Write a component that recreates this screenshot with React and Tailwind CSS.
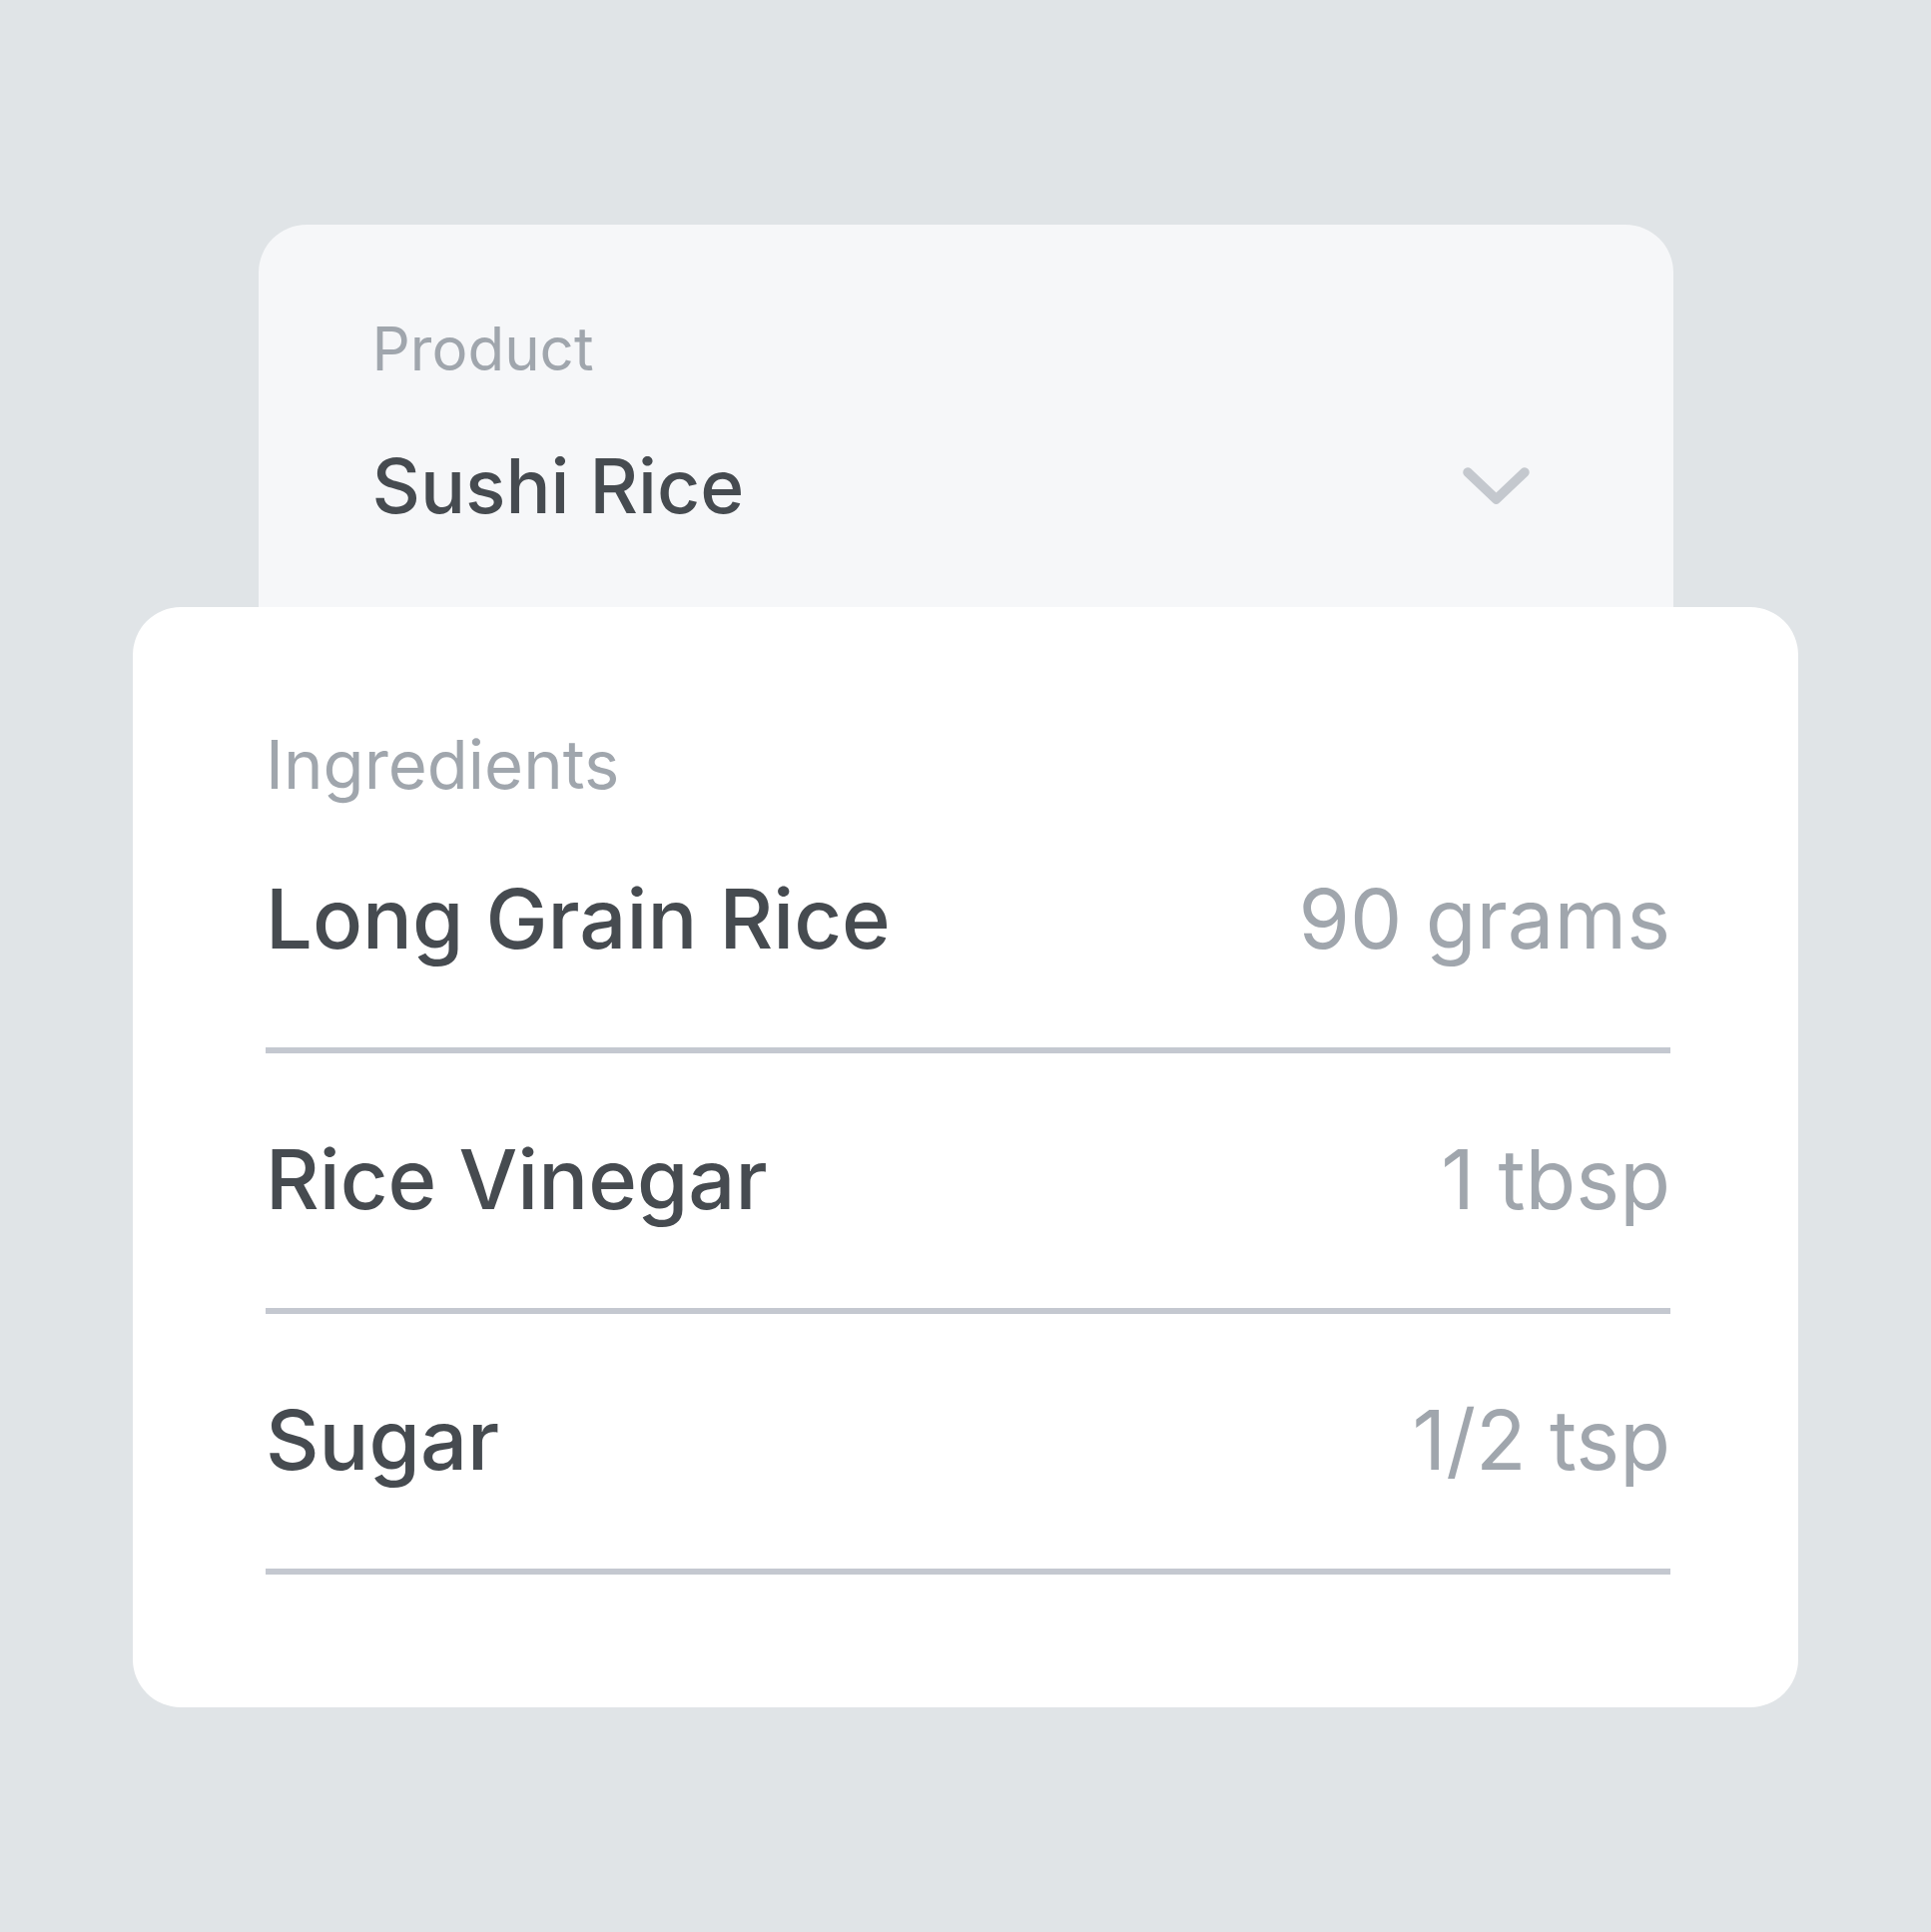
import React from 'react'

const rows = [
  { name: 'Long Grain Rice', amount: '90 grams' },
  { name: 'Rice Vinegar', amount: '1 tbsp' },
  { name: 'Sugar', amount: '1/2 tsp' },
]

export default function App() {
  return (
    <div
      className="min-h-[1935px] w-full bg-[#e0e4e7] flex flex-col items-center pt-[225px]"
      style={{ fontFamily: 'Inter, "Noto Sans", sans-serif' }}
    >
      {/* product select */}
      <div className="w-[1417px] h-[383px] bg-[#f6f7f9] rounded-t-[48px] pl-[114px] pr-[144px] pt-[94px]">
        <p className="text-[60px] leading-none text-[#a0a6ad]">Product</p>
        <div className="mt-[70px] flex items-center justify-between">
          <span className="text-[75px] leading-none font-medium text-[#464b50]">Sushi Rice</span>
          <svg width="67" height="37" viewBox="0 0 67 37" fill="none">
            <polyline
              points="5,5 33.5,32 62,5"
              stroke="#c4c8ce"
              strokeWidth="9.5"
              strokeLinecap="round"
              strokeLinejoin="round"
            />
          </svg>
        </div>
      </div>

      {/* ingredients card */}
      <div className="w-[1668px] bg-white rounded-[48px] pl-[133px] pr-[128px] pt-[124px] pb-[133px]">
        <p className="text-[67px] leading-none text-[#a0a6ad]">Ingredients</p>
        <div className="flex flex-col">
          {rows.map(r => (
            <div
              key={r.name}
              className="flex items-center justify-between pt-[85px] first:pt-[80px] pb-[87px] border-b-[6px] border-[#c4c8d0]"
            >
              <span className="text-[83px] leading-none font-medium text-[#464b50]">{r.name}</span>
              <span className="text-[83px] leading-none text-[#a0a6ad]">{r.amount}</span>
            </div>
          ))}
        </div>
      </div>
    </div>
  )
}
